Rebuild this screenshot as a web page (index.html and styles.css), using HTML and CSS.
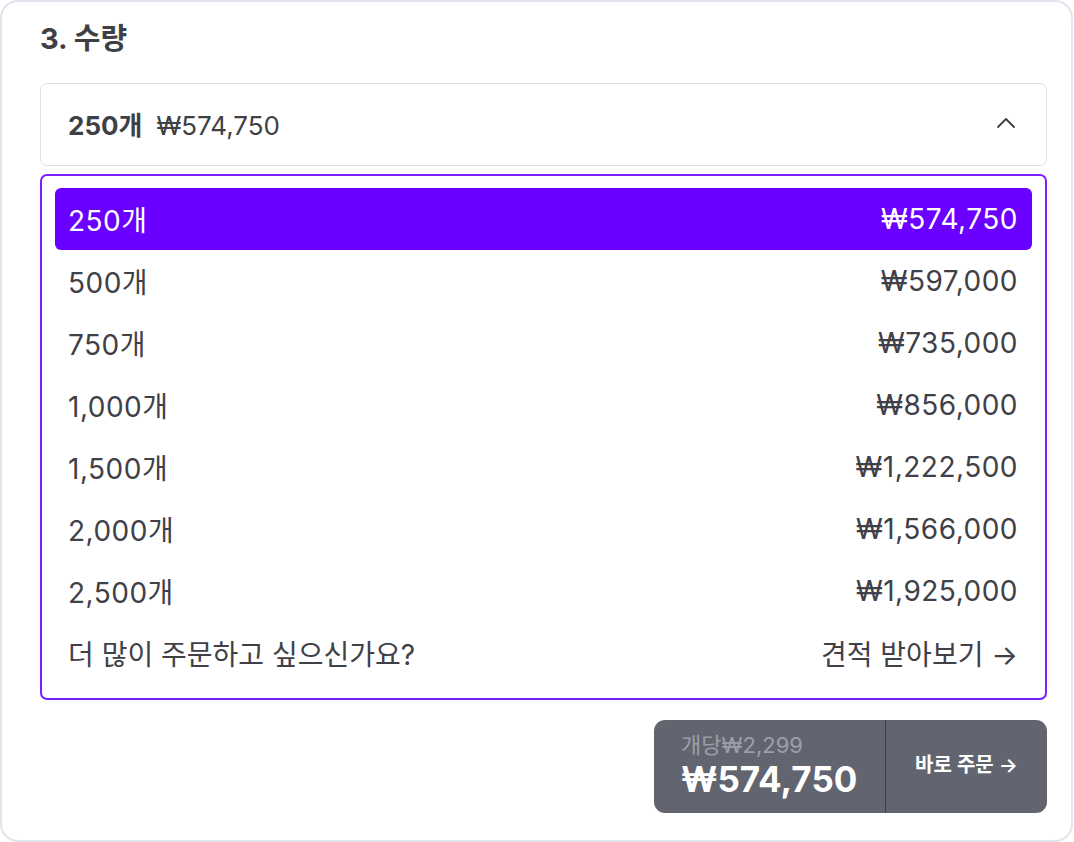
FILE: index.html
```html
<!DOCTYPE html>
<html lang="ko">
<head>
<meta charset="utf-8">
<link rel="stylesheet" href="styles.css">
</head>
<body>
<div class="card">
  <h2 class="title">3. 수량</h2>
  <div class="select">
    <div class="select-value"><b>250개</b><span class="select-price">₩574,750</span></div>
    <svg class="chevron" width="20" height="12" viewBox="0 0 20 12"><path d="M2 10 L10 2 L18 10" fill="none" stroke="#3f3f46" stroke-width="1.8" stroke-linecap="round" stroke-linejoin="round"/></svg>
  </div>
  <ul class="options">
    <li class="option selected"><span>250개</span><span>₩574,750</span></li>
    <li class="option"><span>500개</span><span>₩597,000</span></li>
    <li class="option"><span>750개</span><span>₩735,000</span></li>
    <li class="option"><span>1,000개</span><span>₩856,000</span></li>
    <li class="option"><span>1,500개</span><span>₩1,222,500</span></li>
    <li class="option"><span>2,000개</span><span>₩1,566,000</span></li>
    <li class="option"><span>2,500개</span><span>₩1,925,000</span></li>
    <li class="option option-more"><span>더 많이 주문하고 싶으신가요?</span><span>견적 받아보기 →</span></li>
  </ul>
  <div class="footer">
    <div class="order">
      <div class="order-price">
        <div class="unit">개당₩2,299</div>
        <div class="total">₩574,750</div>
      </div>
      <div class="order-btn">바로 주문 →</div>
    </div>
  </div>
</div>
</body>
</html>
```
FILE: styles.css
```css
* { box-sizing: border-box; }
html, body { margin: 0; padding: 0; background: #fff; }
body {
  font-family: Inter, "Noto Sans CJK KR", sans-serif;
  color: #3f3f46;
}
.card {
  width: 1073px;
  height: 842px;
  border: 2px solid #e2e5ee;
  border-radius: 18px;
  padding: 19px 24px 0 38px;
}
.title {
  margin: 0;
  font-size: 29px;
  font-weight: 700;
  line-height: 36px;
  color: #3f3f46;
}
.select {
  margin-top: 26px;
  height: 83px;
  border: 1.5px solid #e0e0e3;
  border-radius: 7px;
  display: flex;
  align-items: center;
  justify-content: space-between;
  padding: 0 30px 0 27px;
}
.select-value {
  font-size: 26px;
  display: flex;
  align-items: baseline;
  gap: 14px;
  margin-top: -3px;
}
.select-value b { font-weight: 700; }
.chevron { margin-top: -4px; }
.options {
  list-style: none;
  margin: 8px 0 0;
  padding: 12px 13px;
  border: 2px solid #7b1fff;
  border-radius: 7px;
  height: 526px;
}
.option {
  height: 62px;
  display: flex;
  align-items: center;
  justify-content: space-between;
  padding: 0 14px 0 13px;
  font-size: 28px;
  letter-spacing: 0.5px;
  color: #404048;
  border-radius: 6px;
}
.option.option-more { letter-spacing: 0; }
.option.selected {
  background: #6a00ff;
  color: #fff;
}
.footer {
  display: flex;
  justify-content: flex-end;
  margin-top: 20px;
}
.order {
  display: flex;
  width: 393px;
  height: 93px;
  background: #62656f;
  border-radius: 11px;
  overflow: hidden;
}
.order-price {
  width: 232px;
  border-right: 1.5px solid #3b3e46;
  padding: 12px 0 0 27px;
}
.unit {
  font-size: 22px;
  line-height: 26px;
  color: #9b9fa8;
}
.total {
  font-size: 35px;
  font-weight: 700;
  line-height: 42px;
  color: #fff;
}
.order-btn {
  flex: 1;
  display: flex;
  align-items: center;
  justify-content: center;
  color: #fff;
  font-size: 20px;
  font-weight: 600;
  padding-bottom: 6px;
}
```
